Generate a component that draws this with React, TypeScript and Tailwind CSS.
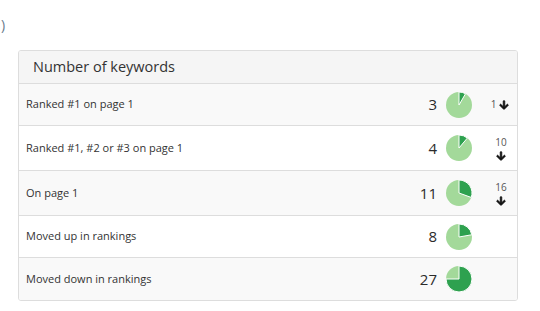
import React from 'react';

type Row = {
  label: string;
  count: number;
  change?: number;
  wrap?: boolean;
};

const TOTAL = 36;

const rows: Row[] = [
  { label: 'Ranked #1 on page 1', count: 3, change: 1 },
  { label: 'Ranked #1, #2 or #3 on page 1', count: 4, change: 10, wrap: true },
  { label: 'On page 1', count: 11, change: 16, wrap: true },
  { label: 'Moved up in rankings', count: 8 },
  { label: 'Moved down in rankings', count: 27 },
];

const Pie = ({ value }: { value: number }) => {
  const r = 13;
  const c = 13;
  const f = Math.min(value / TOTAL, 0.999);
  const a = f * 2 * Math.PI;
  const x = c + r * Math.sin(a);
  const y = c - r * Math.cos(a);
  const large = f > 0.5 ? 1 : 0;
  return (
    <svg width="26" height="26" viewBox="0 0 26 26">
      <circle cx={c} cy={c} r={r} fill="#a3d99a" />
      <path
        d={`M${c} ${c} L${c} ${c - r} A${r} ${r} 0 ${large} 1 ${x} ${y} Z`}
        fill="#2ea14f"
        stroke="#ffffff"
        strokeWidth="1"
        strokeLinejoin="round"
      />
    </svg>
  );
};

const ArrowDown = () => (
  <svg width="10" height="10" viewBox="-20 0 488 512" className="inline-block">
    <path
      fill="#111"
      stroke="#111"
      strokeWidth="40"
      strokeLinejoin="round"
      d="M413.1 222.5l22.2 22.2c9.4 9.4 9.4 24.6 0 33.9L241 473c-9.4 9.4-24.6 9.4-33.9 0L12.7 278.6c-9.4-9.4-9.4-24.6 0-33.9l22.2-22.2c9.5-9.5 25-9.3 34.3.4L184 343.4V56c0-13.3 10.7-24 24-24h32c13.3 0 24 10.7 24 24v287.4l114.8-120.5c9.3-9.8 24.8-10 34.3-.4z"
    />
  </svg>
);

export default function App() {
  return (
    <div className="min-h-[311px] bg-white pt-[14px]" style={{ fontFamily: '"Open Sans", sans-serif' }}>
      <div className="h-[22px] text-[14px] leading-[22px] text-[#6a7a8c] pl-[1px]">)</div>
      <div className="ml-[18px] mt-[14px] w-[500px] rounded-[3px] border border-[#dddddd] overflow-hidden">
        <div className="h-[33px] bg-[#f5f5f5] border-b border-[#dddddd] pl-[14px] flex items-center text-[14.5px] text-[#333]">
          Number of keywords
        </div>
        {rows.map((row, i) => (
          <div
            key={row.label}
            className={`flex items-center pl-[7px] ${row.wrap ? 'h-[45px]' : 'h-[42px]'} ${
              i % 2 === 0 ? 'bg-[#f9f9f9]' : 'bg-white'
            } ${i < rows.length - 1 ? 'border-b border-[#dddddd]' : ''}`}
          >
            <div className="flex-1 text-[11px] text-[#333]">{row.label}</div>
            <div className="w-[40px] text-right text-[15px] font-medium text-[#2b2b2b]">{row.count}</div>
            <div className="ml-[9px] flex">
              <Pie value={row.count} />
            </div>
            <div className="w-[45px] pl-[13px] flex justify-center text-[10px] text-[#555]">
              {row.change !== undefined &&
                (row.wrap ? (
                  <div className="flex flex-col items-center leading-[12px]">
                    <span>{row.change}</span>
                    <span className="mt-[3px] flex">
                      <ArrowDown />
                    </span>
                  </div>
                ) : (
                  <div className="flex items-center gap-[3px] -ml-[2px]">
                    <span>{row.change}</span>
                    <ArrowDown />
                  </div>
                ))}
            </div>
          </div>
        ))}
      </div>
    </div>
  );
}
